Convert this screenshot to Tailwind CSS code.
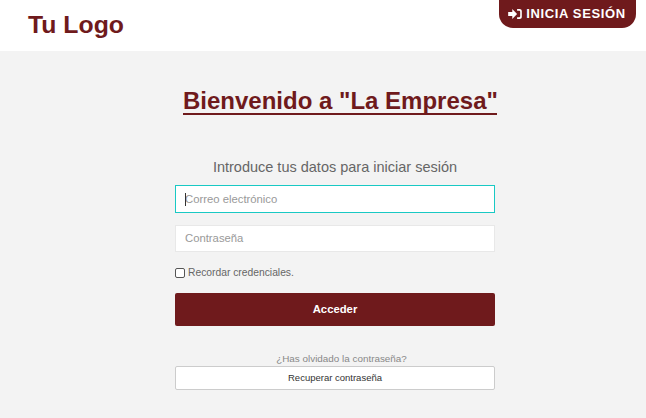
<!DOCTYPE html>
<html lang="es">
<head>
  <meta charset="UTF-8" />
  <title>Login</title>
  <script src="https://cdn.jsdelivr.net/npm/@tailwindcss/browser@4"></script>
</head>
<body class="bg-[#f3f3f3] font-['Liberation_Sans',Arial,sans-serif] h-[418px] overflow-hidden">
  <!-- Header -->
  <header class="h-[51px] bg-white flex justify-between items-start pl-[28px] pr-[10px]">
    <a href="#" class="text-[24.800px] leading-[28px] mt-[11px] font-bold text-[#6f1a1c]">Tu Logo</a>
    <button class="w-[137px] h-[28px] bg-[#6f1a1c] text-white rounded-b-[14px] flex items-center justify-center gap-[4px] pr-[1px] text-[13px] font-bold tracking-[0.65px]">
      <svg width="14" height="10" viewBox="0 0 15 11" fill="#fff"><path d="M0 3.200h4.500V0L9.800 5.500 4.500 11V7.800H0zM9.800 0H12.500C14 0 15 1 15 2.500V8.500C15 10 14 11 12.500 11H9.800V9H12.300C12.900 9 13.200 8.700 13.200 8.100V2.900C13.200 2.300 12.900 2 12.300 2H9.800z"/></svg>
      INICIA SESIÓN
    </button>
  </header>

  <!-- Main -->
  <main class="flex flex-col items-center pl-[24px]">
    <h1 class="mt-[38px] ml-[10px] text-[24px] leading-[24px] font-bold text-[#6f1a1c] border-b-2 border-[#6f1a1c] w-[314px] text-center whitespace-nowrap">Bienvenido a "La Empresa"</h1>

    <form class="w-[320px] mt-[42px] flex flex-col">
      <p class="text-[14.500px] leading-[20px] text-[#666] text-center">Introduce tus datos para iniciar sesión</p>
      <div class="relative mt-[8px] flex">
        <input type="text" placeholder="Correo electrónico" class="w-full h-[28px] bg-white border border-[#19c9c4] px-[9px] text-[11.300px] text-[#333] placeholder:text-[#999] outline-none" />
        <!-- text caret of the focused field -->
        <span class="absolute left-[10px] top-[8px] w-px h-[13px] bg-[#333]"></span>
      </div>
      <input type="password" placeholder="Contraseña" class="mt-[12px] h-[27px] bg-white border border-[#e8e8e8] px-[9px] pb-[1px] text-[11.300px] placeholder:text-[#999] outline-none" />
      <label class="mt-[15px] h-[12px] flex items-center gap-[3px] text-[10.300px] text-[#666]">
        <input type="checkbox" class="-mt-[1px] w-[10px] h-[10px] appearance-none bg-white border border-[#555] rounded-[2px]" />
        Recordar credenciales.
      </label>
      <button type="button" class="mt-[14px] h-[33px] bg-[#6f1a1c] text-white text-[11.300px] font-bold rounded-[2px]">Acceder</button>
      <p class="mt-[27px] ml-[13px] text-[9.900px] leading-[11px] text-[#888] text-center">¿Has olvidado la contraseña?</p>
      <button type="button" class="mt-[2px] h-[24px] bg-white border border-[#ccc] rounded-[2px] text-[9.500px] text-[#333]">Recuperar contraseña</button>
    </form>
  </main>
</body>
</html>
